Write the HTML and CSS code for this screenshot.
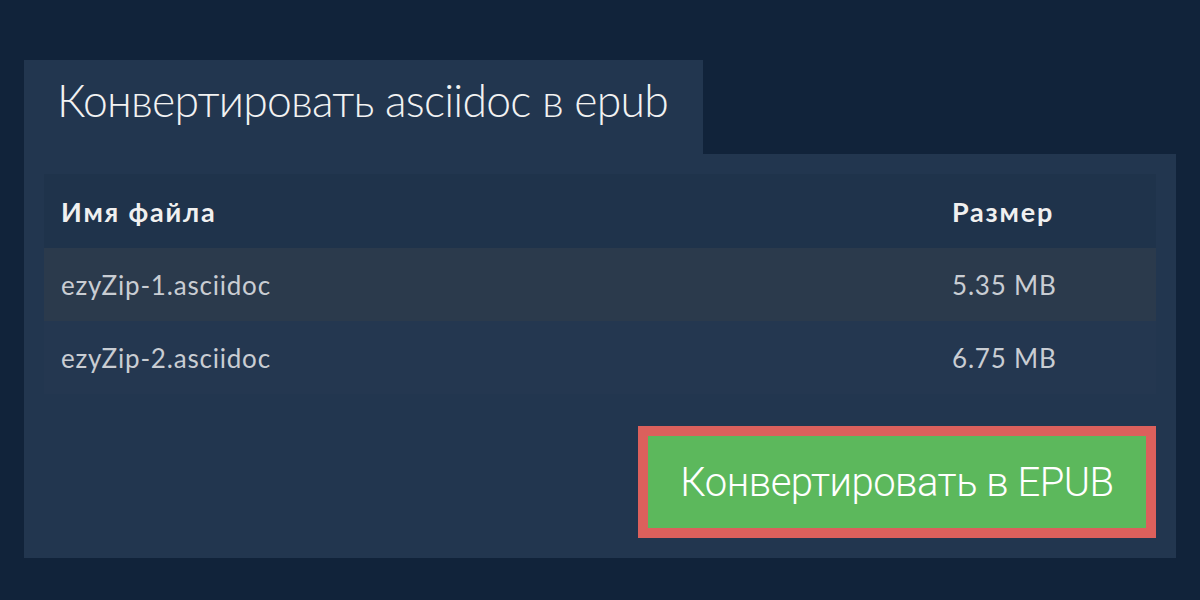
FILE: index.html
```html
<!DOCTYPE html>
<html lang="ru">
<head>
<meta charset="utf-8">
<link rel="stylesheet" href="styles.css">
</head>
<body>
<div class="wrap">
  <div class="tab"><h1 class="title">Конвертировать asciidoc в epub</h1></div>
  <div class="panel">
    <div class="table">
      <div class="row head"><div class="c1">Имя файла</div><div class="c2">Размер</div></div>
      <div class="row odd"><div class="c1">ezyZip-1.asciidoc</div><div class="c2">5.35 MB</div></div>
      <div class="row even"><div class="c1">ezyZip-2.asciidoc</div><div class="c2">6.75 MB</div></div>
    </div>
    <div class="actions"><button class="btn">Конвертировать в EPUB</button></div>
  </div>
</div>
</body>
</html>
```
FILE: styles.css
```css
html, body { margin: 0; padding: 0; }
body { background: #11233a; font-family: Lato, "Liberation Sans", sans-serif; width: 1200px; height: 600px; overflow: hidden; }
.wrap { padding: 60px 0 0 24px; width: 1152px; }
.tab { width: 679px; height: 94px; background: #22364f; box-sizing: border-box; padding: 18px 0 0 33px; }
.title { margin: 0; font-weight: 300; font-size: 44.5px; letter-spacing: -0.75px; color: #f2f2f2; line-height: 1; }
.panel { background: #22364f; padding: 20px; }
.table { width: 1112px; }
.row { display: grid; grid-template-columns: 891px 1fr; align-items: center; padding-left: 17px; }
.head { height: 74px; background: #1f334b; color: #f0f0f0; font-weight: 700; font-size: 27px; letter-spacing: 1.8px; }
.odd, .even { height: 73px; color: #c9cdd3; font-size: 26px; letter-spacing: 0.8px; }
.odd { background: #2b3a4c; }
.even { background: #243750; }
.actions { display: flex; justify-content: flex-end; padding-top: 32px; }
.btn { width: 518px; height: 112px; border: 10px solid #dc605c; background: #5cb85c; color: #ffffff; font-family: Roboto, "Liberation Sans", sans-serif; font-weight: 300; font-size: 40px; letter-spacing: -0.5px; padding: 0; margin: 0; display: flex; align-items: center; justify-content: center; }
```
